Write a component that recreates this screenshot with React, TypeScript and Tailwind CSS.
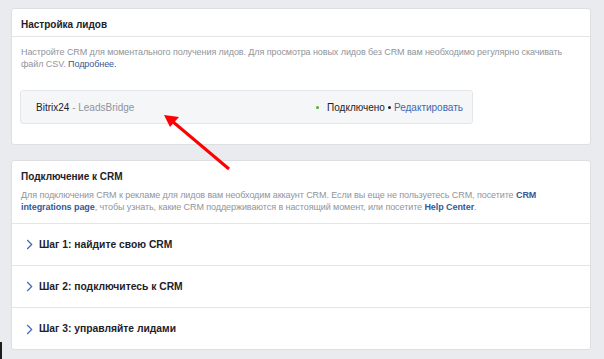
import React from 'react';

const steps = ['Шаг 1: найдите свою CRM', 'Шаг 2: подключитесь к CRM', 'Шаг 3: управляйте лидами'];

const Chevron = () => (
    <svg width="7" height="11" viewBox="0 0 7 11" className="shrink-0">
        <path d="M1.2 1l4.5 4.5-4.5 4.5" fill="none" stroke="#4267b2" strokeWidth="1.2" />
    </svg>
);

const App: React.FC = () => {
    return (
        <div className="relative w-[604px] h-[359px] overflow-hidden bg-[#e9ebee] pl-[11px] pr-[13px] pt-[8px] font-['Liberation_Sans',Arial,sans-serif]">
            {/* Lead setup card */}
            <div className="bg-white border border-[#dddfe2] rounded-[3px] h-[137px]">
                <div className="h-[28px] px-[9px] flex items-center border-b border-[#e5e5e5] pt-[4px]">
                    <span className="text-[10px] font-bold text-[#1d2129]">Настройка лидов</span>
                </div>
                <div className="px-[8px] pt-[10px]">
                    <p className="pl-[1px] text-[9px] tracking-[-0.08px] leading-[11.5px] text-[#90949c]">
                        Настройте CRM для моментального получения лидов. Для просмотра новых лидов без CRM вам необходимо регулярно скачивать файл CSV. <span className="text-[#365899]">Подробнее.</span>
                    </p>
                    <div className="mt-[20px] w-[453px] h-[34px] bg-[#f5f6f7] border border-[#e5e6e9] rounded-[3px] flex items-center justify-between pl-[15px] pr-[9px] text-[10px]">
                        <span className="text-[#1d2129]">
                            Bitrix24 <span className="text-[#90949c]">- LeadsBridge</span>
                        </span>
                        <span className="flex items-center text-[#1d2129]">
                            <span className="w-[3px] h-[3px] rounded-full bg-[#42b72a] mr-[8px]" />
                            Подключено
                            <span className="w-[3px] h-[3px] rounded-full bg-[#1d2129] mx-[3px]" />
                            <span className="text-[#4267b2]">Редактировать</span>
                        </span>
                    </div>
                </div>
            </div>

            {/* CRM connection card */}
            <div className="mt-[15px] bg-white border border-[#dddfe2] rounded-[3px] h-[190px]">
                <div className="px-[9px] pt-[10px] h-[63px] border-b border-[#e5e5e5]">
                    <div className="text-[10px] font-bold text-[#1d2129] leading-[12px]">Подключение к CRM</div>
                    <p className="mt-[6px] text-[9px] tracking-[-0.08px] leading-[12px] text-[#90949c]">
                        Для подключения CRM к рекламе для лидов вам необходим аккаунт CRM. Если вы еще не пользуетесь CRM, посетите <span className="font-bold text-[#365899]">CRM integrations page</span>, чтобы узнать, какие CRM поддерживаются в настоящий момент, или посетите <span className="font-bold text-[#365899]">Help Center</span>.
                    </p>
                </div>
                {steps.map((step, i) => (
                    <div
                        key={step}
                        className={`h-[42px] flex items-center gap-[6px] pl-[14px] ${i < steps.length - 1 ? 'border-b border-[#e5e5e5]' : ''}`}
                    >
                        <Chevron />
                        <span className="text-[10.3px] font-bold text-[#1d2129]">{step}</span>
                    </div>
                ))}
            </div>

            {/* Red annotation arrow */}
            <svg className="absolute left-0 top-0 pointer-events-none" width="604" height="359">
                <line x1="229" y1="169" x2="172" y2="121" stroke="#ff0000" strokeWidth="3" />
                <polygon points="164,115 179,117 170,127" fill="#ff0000" />
            </svg>

            {/* stray edge mark */}
            <div className="absolute left-0 bottom-0 w-[2px] h-[17px] bg-[#1d1d1d]" />
        </div>
    );
};

export default App;
